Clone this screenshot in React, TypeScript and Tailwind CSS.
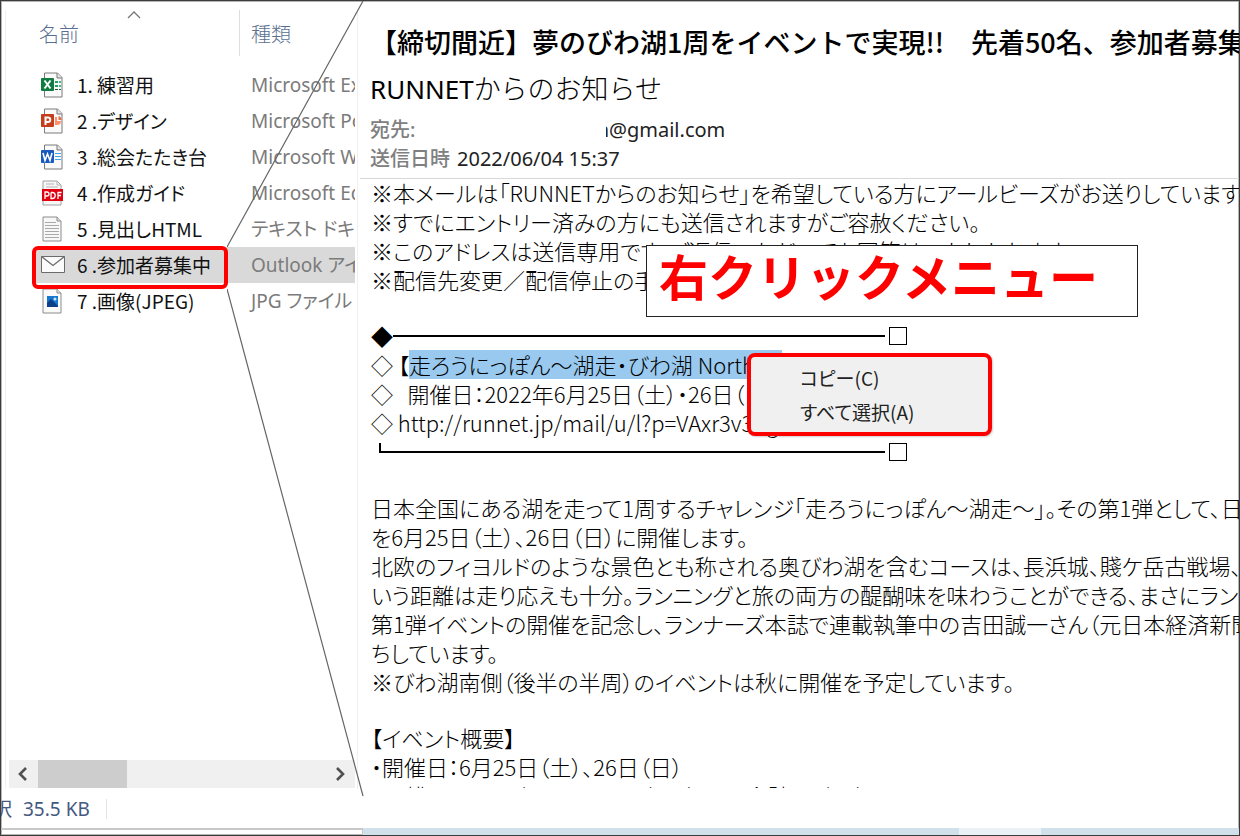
import type { ReactNode } from "react";

const jp = "font-['Noto_Sans_CJK_JP',sans-serif]";
const ui = "font-['Noto_Sans','Noto_Sans_CJK_JP',sans-serif]";

function Sheet({ children }: { children?: ReactNode }) {
    return (
        <svg viewBox="0 0 24 26" className="h-[26px] w-6 shrink-0" fill="none" aria-hidden="true">
            <path d="M4.5 1h13l4.500 4.500V25H4.500z" fill="#fafafa" stroke="#7a7a7a" />
            <path d="M17 1v5h5" fill="#e4e4e4" stroke="#7a7a7a" />
            {children}
        </svg>
    );
}

const ExcelIcon = () => (
    <Sheet>
        <path d="M15 9h3v2h-3zM15 13h3v2h-3z" fill="#21a366" />
        <path d="M19 9h2v2h-2zM19 13h2v2h-2z" fill="#33c481" />
        <path d="M15 17h3v1h-3zM19 17h2v1h-2z" fill="#185c37" />
        <rect x="1" y="6" width="13" height="13" rx="1" fill="#107c41" />
        <path d="M4.500 8.500l6 8M10.500 8.500l-6 8" stroke="#fff" strokeWidth="2" />
    </Sheet>
);

const PowerPointIcon = () => (
    <Sheet>
        <path d="M15 9v8h2a4 4 0 0 0 4-4h-4V9z" fill="#ff8f6b" />
        <path d="M18.500 8v4h3a4 4 0 0 0-3-4z" fill="#ed6c47" />
        <rect x="1" y="6" width="13" height="13" rx="1" fill="#c43e1c" />
        <path d="M5.500 17V9.500h2.500a2.200 2.200 0 0 1 0 4.500H5.500" stroke="#fff" strokeWidth="2" />
    </Sheet>
);

const WordIcon = () => (
    <Sheet>
        <path d="M15 9.500h6M15 12.500h6M15 15.500h6" stroke="#41a5ee" strokeWidth="1.200" />
        <rect x="1" y="6" width="13" height="13" rx="1" fill="#185abd" />
        <path d="M3 9l2 7.500L7.500 10l2.500 6.500L12 9" stroke="#fff" strokeWidth="1.600" />
    </Sheet>
);

const PdfIcon = () => (
    <svg viewBox="0 0 24 26" className="h-[26px] w-6 shrink-0" fill="none" aria-hidden="true">
        <path d="M3 1h14l4 4v20H3z" fill="#f7f7f7" stroke="#a0a0a0" />
        <path d="M17 1v4h4M6 4h8M6 7h12" stroke="#b5b5b5" />
        <rect x="2" y="9" width="21" height="12" fill="#e1000f" />
        <path
            d="M5 19v-7h2a1.800 1.800 0 0 1 0 4H5M11 12.500v6h1.200a2.800 2.800 0 0 0 0-6H11M18 19v-6.500h3.500M18 15.500h3"
            stroke="#fff"
            strokeWidth="1.300"
        />
    </svg>
);

const TextIcon = () => (
    <svg viewBox="0 0 24 26" className="h-[26px] w-6 shrink-0" fill="none" aria-hidden="true">
        <path d="M3 1h14l4 4v20H3z" fill="#f7f7f7" stroke="#8c8c8c" />
        <path d="M17 1v4h4" fill="#ddd" stroke="#8c8c8c" />
        <path d="M5 6.500h11M5 9.500h14M5 12.500h14M5 15.500h14M5 18.500h14M5 21.500h14" stroke="#a8a8a8" />
    </svg>
);

const MailIcon = () => (
    <svg viewBox="0 0 26 26" className="h-[26px] w-[26px] shrink-0" fill="none" aria-hidden="true">
        <path d="M1.500 4.500h23v16h-23z" fill="#fbfbfb" stroke="#6b6b6b" />
        <path d="M1.500 4.500L13 13.500l11.500-9" stroke="#6b6b6b" strokeWidth="1.300" />
    </svg>
);

const ImageIcon = () => (
    <svg viewBox="0 0 24 26" className="h-[26px] w-6 shrink-0" fill="none" aria-hidden="true">
        <path d="M3 1h14l4 4v20H3z" fill="#fafafa" stroke="#8c8c8c" />
        <path d="M17 1v4h4" fill="#e4e4e4" stroke="#8c8c8c" />
        <rect x="7" y="8" width="11" height="11" fill="#1577cf" />
        <path d="M7 15l4-4 7 7v1H7z" fill="#0b3f86" />
        <circle cx="15" cy="11" r="1.500" fill="#cfe8ff" />
    </svg>
);

const files = [
    { icon: <ExcelIcon />, name: "1. 練習用", type: "Microsoft Excel" },
    { icon: <PowerPointIcon />, name: "2 .デザイン", type: "Microsoft PowerPoint" },
    { icon: <WordIcon />, name: "3 .総会たたき台", type: "Microsoft Word" },
    { icon: <PdfIcon />, name: "4 .作成ガイド", type: "Microsoft Edge" },
    { icon: <TextIcon />, name: "5 .見出しHTML", type: "テキスト ドキュメント" },
    { icon: <MailIcon />, name: "6 .参加者募集中", type: "Outlook アイテム", selected: true },
    { icon: <ImageIcon />, name: "7 .画像(JPEG)", type: "JPG ファイル" },
];

function FileList() {
    return (
        <aside className="relative flex w-[354px] shrink-0 flex-col">
            <div className="min-h-0 flex-1 overflow-hidden pl-[34px]">
                <table className="w-full table-fixed border-collapse text-left">
                    <colgroup>
                        <col className="w-[205px]" />
                        <col />
                    </colgroup>
                    <thead>
                        <tr className={`h-[66px] text-[20px] text-[#5a6f8f] ${jp}`}>
                            <th className="relative pl-1 font-light">
                                名前
                                <svg viewBox="0 0 14 8" className="absolute top-[10px] left-[92px] h-2 w-[14px]" fill="none" aria-hidden="true">
                                    <path d="M1 7l6-6 6 6" stroke="#777" strokeWidth="1.300" />
                                </svg>
                                <span className="absolute top-[9px] right-0 h-[46px] w-px bg-[#dedede]" />
                            </th>
                            <th className="pl-[11px] font-light">種類</th>
                        </tr>
                    </thead>
                    <tbody>
                        {files.map((f) => (
                            <tr key={f.name} className={f.selected ? "h-9 bg-[#d9d9d9]" : "h-9"}>
                                <td className="p-0">
                                    <div className="flex items-center gap-[13px] pl-[5px] whitespace-nowrap">
                                        <span className="w-6">{f.icon}</span>
                                        <span className={`text-[19px] leading-9 text-[#111] ${jp} [font-feature-settings:'palt']`}>{f.name}</span>
                                    </div>
                                </td>
                                <td className={`overflow-hidden p-0 pl-[11px] text-[19px] leading-9 whitespace-nowrap text-[#7b7b7b] ${ui} [font-feature-settings:'palt']`}>
                                    {f.type}
                                </td>
                            </tr>
                        ))}
                    </tbody>
                </table>
            </div>

            {/* horizontal scrollbar */}
            <div className="ml-2 flex h-7 items-stretch bg-[#f0f0f0]">
                <button aria-label="左へスクロール" className="flex w-[29px] items-center justify-center pr-1">
                    <svg viewBox="0 0 10 14" className="h-[14px] w-[10px]" fill="none">
                        <path d="M9 1L3 7l6 6" stroke="#505050" strokeWidth="2.600" />
                    </svg>
                </button>
                <div className="flex-1">
                    <div className="h-full w-[89px] bg-[#cdcdcd]" />
                </div>
                <button aria-label="右へスクロール" className="flex w-[29px] items-center justify-center">
                    <svg viewBox="0 0 10 14" className="h-[14px] w-[10px]" fill="none">
                        <path d="M1 1l6 6-6 6" stroke="#505050" strokeWidth="2.600" />
                    </svg>
                </button>
            </div>

            {/* frame round the selected file */}
            <div className="absolute top-[245px] left-[31px] h-[43px] w-[196px] rounded-md border-4 border-[#ff0000]" />
        </aside>
    );
}

function Line({ children }: { children: ReactNode }) {
    return <p className="h-[29px]">{children}</p>;
}

function Rule({ start }: { start: ReactNode }) {
    return (
        <div className="flex h-[29px] w-[536px] items-center">
            {start}
            <span className="h-[2px] flex-1 bg-black" />
            <span className="ml-1 h-[18px] w-[18px] border border-black" />
        </div>
    );
}

const Blank = () => <div className="h-[27px]" />;
const Mark = () => <span className="inline-block w-[22px]">◇</span>;

function Mail() {
    return (
        <main className="relative ml-[5px] min-w-0 flex-1 overflow-hidden whitespace-nowrap">
            <header className={`border-b border-[#d8d8d8] pt-5 pb-[5px] pl-[10px] ${ui}`}>
                <h1 className={`text-[27px] leading-[42px] font-medium text-black ${jp}`}>
                    【締切間近】夢のびわ湖1周をイベントで実現!!　先着50名、参加者募集中
                </h1>
                <p className="text-[27px] leading-[51px] font-light text-black">
                    <span className="text-[26px] font-normal">RUNNET</span>からのお知らせ
                </p>
                <div className="flex text-[20px] leading-[29px]">
                    <span className="w-[236px] font-medium text-[#808080]">宛先:</span>
                    <span className="flex w-[3px] justify-end overflow-hidden text-[#222]">n</span>
                    <span className="text-[#222]">@gmail.com</span>
                </div>
                <div className="flex gap-[7px] text-[20px] leading-[29px]">
                    <span className="font-medium text-[#808080]">送信日時</span>
                    <span className="text-[#222]">2022/06/04 15:37</span>
                </div>
            </header>

            <article className={`-mt-px pl-[11px] text-[22px] leading-[29px] font-light text-black ${jp} [font-feature-settings:'palt']`}>
                <Line>※本メールは「RUNNETからのお知らせ」を希望している方にアールビーズがお送りしています。</Line>
                <Line>※すでにエントリー済みの方にも送信されますがご容赦ください。</Line>
                <Line>※このアドレスは送信専用です。ご返信いただいても回答はいたしかねます。</Line>
                <Line>※配信先変更／配信停止の手続きはこちら</Line>
                <Blank />
                <Rule start={<span className="w-[22px]">◆</span>} />
                <Line>
                    <Mark /> 【
                    <span className="inline-block bg-[#99c9ef]">走ろうにっぽん～湖走・びわ湖 North 編</span>
                </Line>
                <Line>
                    <Mark />
                    {"\u00a0\u00a0\u00a0"}開催日：2022年6月25日（土）・26日（日）
                </Line>
                <Line>
                    <Mark /> http://runnet.jp/mail/u/l?p=VAxr3v3hg
                </Line>
                <Rule start={<span className="mt-[6px] ml-2 h-[10px] w-[2px] self-start bg-black" />} />
                <Blank />
                <Line>日本全国にある湖を走って1周するチャレンジ「走ろうにっぽん～湖走～」。その第1弾として、日本</Line>
                <Line>を6月25日（土）、26日（日）に開催します。</Line>
                <Line>北欧のフィヨルドのような景色とも称される奥びわ湖を含むコースは、長浜城、賤ケ岳古戦場、</Line>
                <Line>いう距離は走り応えも十分。ランニングと旅の両方の醍醐味を味わうことができる、まさにランナー</Line>
                <Line>第1弾イベントの開催を記念し、ランナーズ本誌で連載執筆中の吉田誠一さん（元日本経済新聞</Line>
                <Line>ちしています。</Line>
                <Line>※びわ湖南側（後半の半周）のイベントは秋に開催を予定しています。</Line>
                <Blank />
                <Line>【イベント概要】</Line>
                <Line>・開催日：6月25日（土）、26日（日）</Line>
                <Line>・距離：1日目 76km、2日目 74km（2日間合計150km）</Line>
            </article>

            {/* callout */}
            <div className={`absolute top-[244px] left-[286px] h-[72px] w-[492px] border border-[#222] bg-white pl-3 text-[49px] leading-[58px] font-bold text-[#ff0000] ${jp}`}>
                右クリックメニュー
            </div>

            {/* context menu */}
            <div
                role="menu"
                className={`absolute top-[352px] left-[387px] flex w-[245px] flex-col rounded-lg border-4 border-[#ff0000] bg-[#f0f0f0] pt-[4px] pb-[3px] text-[19px] leading-[34px] text-[#222] shadow-[1px_1px_2px_#0003] ${jp} [font-feature-settings:'palt']`}
            >
                <button role="menuitem" className="pl-[49px] text-left">コピー(C)</button>
                <button role="menuitem" className="pl-[49px] text-left">すべて選択(A)</button>
            </div>
        </main>
    );
}

export default function App() {
    return (
        <div className="relative flex h-screen flex-col overflow-hidden border border-[#3c3c3c] bg-white shadow-[inset_0_0_0_1px_#b5b5b5]">
            <div className="flex min-h-0 flex-1">
                <FileList />
                <Mail />
            </div>

            <footer className={`flex h-10 items-center pt-[2px] text-[19px] text-[#44597f] ${ui}`}>
                <span className="flex w-[11px] justify-end overflow-hidden">択</span>
                <span className="ml-[11px]">35.5 KB</span>
                <span className="ml-4 h-5 w-px bg-[#e4e4e4]" />
            </footer>
            <div className="flex h-[7px]">
                <div className="w-[362px] border-t-2 border-r border-[#c8c8c8]" />
                <div className="flex-[596] bg-[#d0e1ec]" />
                <div className="flex-[82] bg-[#eaf2f8]" />
                <div className="flex-[198] bg-[#d0e1ec]" />
            </div>

            {/* pane edges and the lines that lead from the file to its mail */}
            <div className="absolute top-[9px] bottom-[46px] left-[4px] w-px bg-[#f0f0f0]" />
            <div className="absolute top-[9px] bottom-[46px] left-[356px] w-px bg-[#f0f0f0]" />
            <svg viewBox="0 0 137 796" className="pointer-events-none absolute top-0 left-[226px] h-[796px] w-[137px]" fill="none" aria-hidden="true">
                <path d="M136 0L0 246M0 288L136 795" stroke="#666" strokeWidth="1.200" />
            </svg>
        </div>
    );
}
